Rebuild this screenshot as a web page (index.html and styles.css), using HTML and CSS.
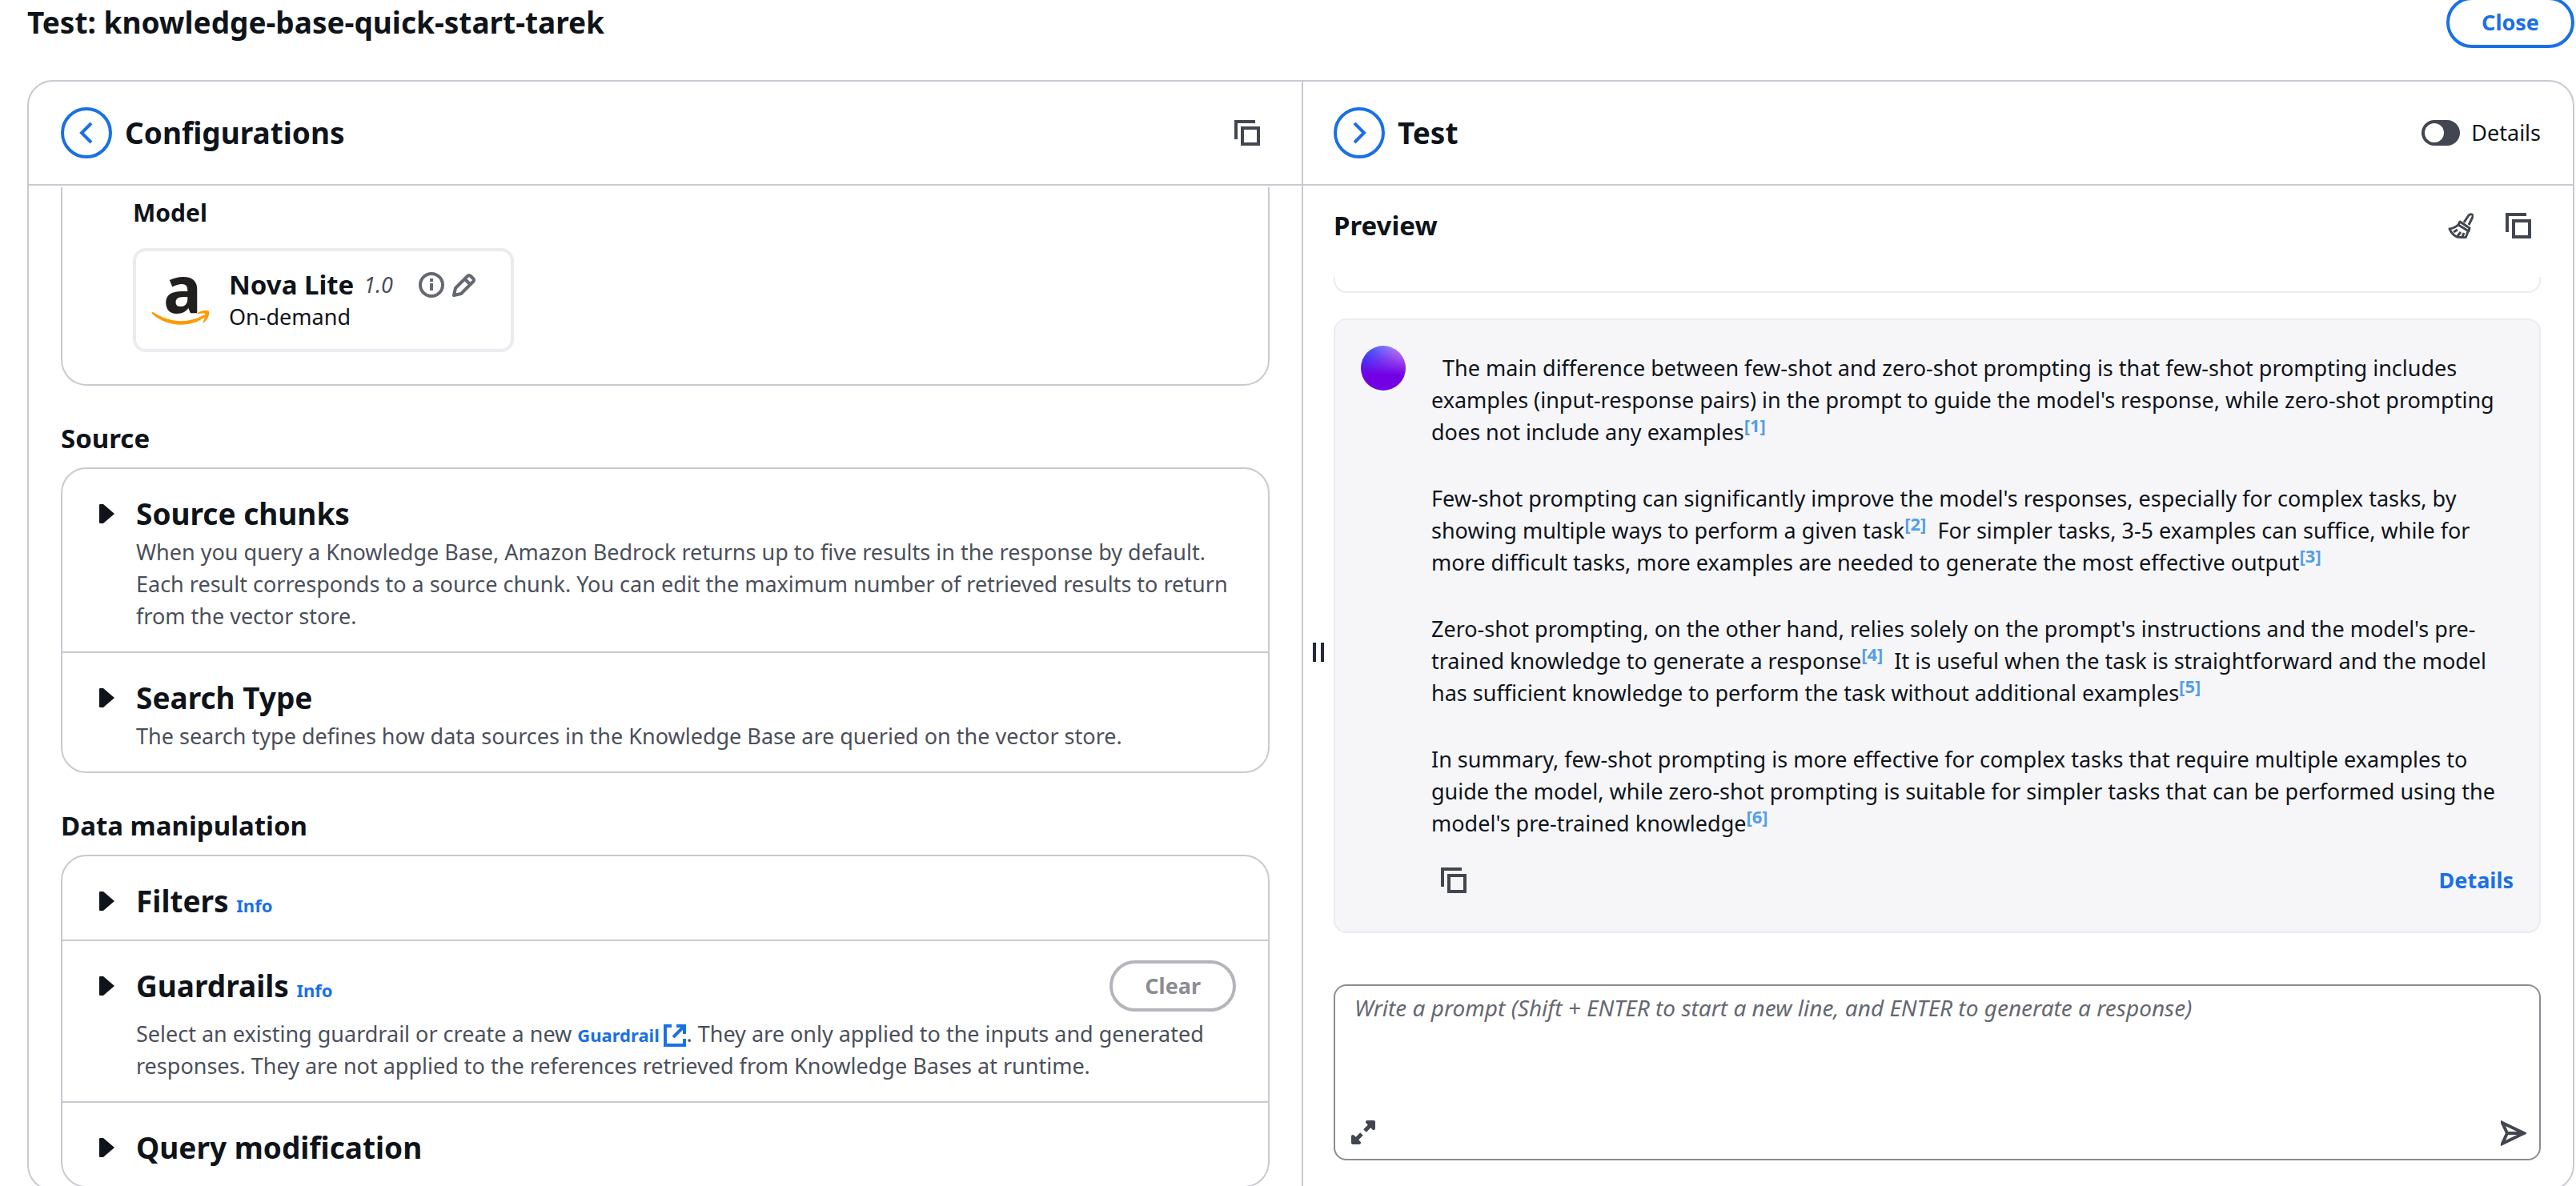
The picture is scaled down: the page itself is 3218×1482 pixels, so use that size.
FILE: index.html
```html
<!DOCTYPE html>
<html lang="en">
<head>
<meta charset="utf-8">
<title>Test: knowledge-base-quick-start-tarek</title>
<link rel="stylesheet" href="styles.css">
</head>
<body>
<svg class="sprite" aria-hidden="true">
  <symbol id="copy" viewBox="0 0 32 32"><path d="M26 2H2v22M10 10h20v20H10z" fill="none" stroke="currentColor" stroke-width="4"/></symbol>
  <symbol id="caret" viewBox="0 0 32 32"><path d="M6 5q0-1 1-1h4l14 12-14 12H7q-1 0-1-1z" fill="currentColor"/></symbol>
</svg>

<header class="page-header">
  <h1 class="title">Test: knowledge-base-quick-start-tarek</h1>
  <button class="btn" type="button">Close</button>
</header>

<main class="panel">
  <section class="pane pane-config">
    <header class="pane-header">
      <button class="round" type="button" aria-label="Collapse configurations"><svg class="icon" viewBox="0 0 32 32"><path d="M22 4L10 16l12 12" fill="none" stroke="currentColor" stroke-width="4"/></svg></button>
      <h2 class="title">Configurations</h2>
      <button class="icon-btn push" type="button" aria-label="Copy configurations"><svg class="icon"><use href="#copy"/></svg></button>
    </header>
    <div class="config-body">
      <div class="box box-model">
        <h4 class="label">Model</h4>
        <div class="model-card">
          <svg class="logo" viewBox="0 0 72 64" role="img" aria-label="Amazon">
            <text x="38" y="47" class="logo-letter" text-anchor="middle">a</text>
            <path fill="#ff9900" d="M1 46c20 13 43 15 63 4 2-1 4 1 2 2C48 66 18 65 0 48c-1-1 0-2 1-2z"/>
            <path fill="#ff9900" d="M57 47c4-3 13-4 14-2 1 3-1 10-6 14-1 1-2 0-1-1 1-3 3-8 2-10-1-1-6 0-9 0-1 0-1-1 0-1z"/>
          </svg>
          <div class="model-text">
            <div class="model-row">
              <span class="model-name">Nova Lite</span>
              <em class="model-version">1.0</em>
              <span class="model-icons">
                <button class="icon-btn muted bare" type="button" aria-label="Model info"><svg class="icon" viewBox="0 0 32 32"><circle cx="16" cy="16" r="14" fill="none" stroke="currentColor" stroke-width="4"/><path d="M14 8h4v4h-4zM14 14h4v9h-4z" fill="currentColor"/></svg></button>
                <button class="icon-btn muted bare" type="button" aria-label="Edit model"><svg class="icon" viewBox="0 0 32 32"><path d="M4 29l2-9L21 5q2-2 4 0l3 3q2 2 0 4L13 27zM18 9l6 6" fill="none" stroke="currentColor" stroke-width="4" stroke-linejoin="round"/></svg></button>
              </span>
            </div>
            <div class="model-mode">On-demand</div>
          </div>
        </div>
      </div>

      <h3 class="group-title">Source</h3>
      <div class="box">
        <section class="row">
          <button class="caret" type="button" aria-label="Expand source chunks"><svg class="icon"><use href="#caret"/></svg></button>
          <div class="row-main">
            <h4 class="title">Source chunks</h4>
            <p class="desc">When you query a Knowledge Base, Amazon Bedrock returns up to five results in the response by default. Each result corresponds to a source chunk. You can edit the maximum number of retrieved results to return from the vector store.</p>
          </div>
        </section>
        <section class="row">
          <button class="caret" type="button" aria-label="Expand search type"><svg class="icon"><use href="#caret"/></svg></button>
          <div class="row-main">
            <h4 class="title">Search Type</h4>
            <p class="desc">The search type defines how data sources in the Knowledge Base are queried on the vector store.</p>
          </div>
        </section>
      </div>

      <h3 class="group-title">Data manipulation</h3>
      <div class="box">
        <section class="row">
          <button class="caret" type="button" aria-label="Expand filters"><svg class="icon"><use href="#caret"/></svg></button>
          <div class="row-main">
            <h4 class="title">Filters <a class="link small" href="#">Info</a></h4>
          </div>
        </section>
        <section class="row row-action">
          <button class="caret" type="button" aria-label="Expand guardrails"><svg class="icon"><use href="#caret"/></svg></button>
          <div class="row-main">
            <div class="row-head">
              <h4 class="title">Guardrails <a class="link small" href="#">Info</a></h4>
              <button class="btn" type="button" disabled>Clear</button>
            </div>
            <p class="desc">Select an existing guardrail or create a new <a class="link small" href="#">Guardrail <svg class="external" viewBox="0 0 28 28"><path d="M10 2H2v24h24v-8M16 2h10v10M26 2L12 16" fill="none" stroke="currentColor" stroke-width="4"/></svg></a>. They are only applied to the inputs and generated responses. They are not applied to the references retrieved from Knowledge Bases at runtime.</p>
          </div>
        </section>
        <section class="row">
          <button class="caret" type="button" aria-label="Expand query modification"><svg class="icon"><use href="#caret"/></svg></button>
          <div class="row-main">
            <h4 class="title">Query modification</h4>
          </div>
        </section>
      </div>
    </div>
  </section>

  <section class="pane pane-test">
    <header class="pane-header">
      <button class="round" type="button" aria-label="Collapse test"><svg class="icon" viewBox="0 0 32 32"><path d="M10 4l12 12-12 12" fill="none" stroke="currentColor" stroke-width="4"/></svg></button>
      <h2 class="title">Test</h2>
      <label class="switch push"><input class="switch-input" type="checkbox" role="switch">Details</label>
    </header>
    <div class="test-body">
      <div class="resizer" role="separator" aria-orientation="vertical"><span class="bar"></span><span class="bar"></span></div>
      <div class="chat">
        <div class="preview-header">
          <h3 class="subtitle">Preview</h3>
          <div class="preview-actions">
            <button class="icon-btn" type="button" aria-label="Clear conversation"><svg class="icon" viewBox="0 0 32 32"><path d="M20 12l6-9q2-2 4-1t1 3l-5 10M15 11l12 8-1 4-13-8zM14 14q-5 5-12 6 3 7 9 10l11 1q2-4 3-8M7 24l5-3M12 29l4-5M18 30l2-5" fill="none" stroke="currentColor" stroke-width="3" stroke-linejoin="round"/></svg></button>
            <button class="icon-btn" type="button" aria-label="Copy conversation"><svg class="icon"><use href="#copy"/></svg></button>
          </div>
        </div>
        <div class="previous-message"></div>
        <article class="message">
          <span class="avatar"></span>
          <div class="message-main">
            <p class="answer">&nbsp; The main difference between few-shot and zero-shot prompting is that few-shot prompting includes examples (input-response pairs) in the prompt to guide the model's response, while zero-shot prompting does not include any examples<sup class="cite">[1]</sup></p>
            <p class="answer">Few-shot prompting can significantly improve the model's responses, especially for complex tasks, by showing multiple ways to perform a given task<sup class="cite">[2]</sup>&nbsp; For simpler tasks, 3-5 examples can suffice, while for more difficult tasks, more examples are needed to generate the most effective output<sup class="cite">[3]</sup></p>
            <p class="answer">Zero-shot prompting, on the other hand, relies solely on the prompt's instructions and the model's pre-trained knowledge to generate a response<sup class="cite">[4]</sup>&nbsp; It is useful when the task is straightforward and the model has sufficient knowledge to perform the task without additional examples<sup class="cite">[5]</sup></p>
            <p class="answer">In summary, few-shot prompting is more effective for complex tasks that require multiple examples to guide the model, while zero-shot prompting is suitable for simpler tasks that can be performed using the model's pre-trained knowledge<sup class="cite">[6]</sup></p>
            <div class="message-actions">
              <button class="icon-btn" type="button" aria-label="Copy answer"><svg class="icon"><use href="#copy"/></svg></button>
              <a class="link" href="#">Details</a>
            </div>
          </div>
        </article>
        <form class="composer">
          <textarea class="prompt" aria-label="Prompt" placeholder="Write a prompt (Shift + ENTER to start a new line, and ENTER to generate a response)"></textarea>
          <div class="composer-actions">
            <button class="icon-btn bare" type="button" aria-label="Expand prompt"><svg class="icon" viewBox="0 0 32 32"><path d="M20 2h8v8zM2 20v8h8z" fill="currentColor" stroke="currentColor" stroke-width="4" stroke-linejoin="round"/><path d="M24 6l-7 7M6 24l7-7" stroke="currentColor" stroke-width="5"/></svg></button>
            <button class="icon-btn bare" type="button" aria-label="Send"><svg class="icon" viewBox="0 0 32 32"><path d="M2 3l27 13L2 29l6-13zM8 16h20" fill="none" stroke="currentColor" stroke-width="4"/></svg></button>
          </div>
        </form>
      </div>
    </div>
  </section>
</main>
</body>
</html>
```
FILE: styles.css
```css
:root {
  --text: #0f141a;
  --muted: #4b4f5a;
  --icon: #424650;
  --link: #1a70e6;
  --line: #c9c9d1;
  --line-soft: #ebebf0;
}

* { box-sizing: border-box; }

body {
  display: flex;
  flex-direction: column;
  height: 100vh;
  margin: 0;
  padding: 0 2px 0 34px;
  overflow: hidden;
  background: #fff;
  color: var(--text);
  font: 27px/40px "Noto Sans", "Liberation Sans", sans-serif;
}

h1, h2, h3, h4, p { margin: 0; }
button { font: inherit; cursor: pointer; }

.sprite { display: none; }
.push { margin-left: auto; }

.title { font-size: 37px; line-height: 48px; font-weight: 700; }
.subtitle, .group-title { font-size: 33px; line-height: 40px; font-weight: 700; }
.link { color: var(--link); font-size: 27px; font-weight: 700; text-decoration: none; }
.small { font-size: 22px; line-height: 24px; }

.icon { display: block; width: 32px; height: 32px; }
.icon-btn { display: block; padding: 12px; border: 0; background: none; color: var(--icon); }
.bare { padding: 0; }
.muted { color: #656871; }

.btn {
  height: 64px;
  padding: 0 40px;
  border: 4px solid var(--link);
  border-radius: 32px;
  background: #fff;
  color: var(--link);
  font-size: 27px;
  font-weight: 700;
}
.btn:disabled { border-color: #b4b4bb; color: #8c8c94; cursor: default; }

.round {
  display: flex;
  align-items: center;
  justify-content: center;
  width: 64px;
  height: 64px;
  padding: 0;
  border: 4px solid var(--link);
  border-radius: 50%;
  background: #fff;
  color: var(--link);
}

.page-header {
  display: flex;
  flex: none;
  align-items: center;
  justify-content: space-between;
  height: 56px;
}

.panel {
  display: grid;
  flex: 1;
  grid-template-columns: calc(50% + 3px) 1fr;
  min-height: 0;
  margin: 44px 0 -6px;
  border: 2px solid var(--line);
  border-radius: 32px;
  overflow: hidden;
}
.pane { display: flex; flex-direction: column; min-width: 0; min-height: 0; }
.pane-config { border-right: 2px solid var(--line); }
.pane-header {
  display: flex;
  flex: none;
  align-items: center;
  gap: 16px;
  height: 130px;
  padding: 0 40px;
  border-bottom: 2px solid var(--line);
}
.pane-test .pane-header { padding-left: 38px; }

/* Configurations */
.config-body { padding: 2px 40px 0; overflow: hidden; }
.box { border: 2px solid var(--line); border-radius: 32px; }
.box-model { padding: 12px 88px 40px; border-top: 0; border-radius: 0 0 32px 32px; }
.label { font-size: 30px; line-height: 40px; font-weight: 700; }
.model-card {
  display: flex;
  align-items: center;
  gap: 24px;
  width: 476px;
  height: 130px;
  margin-top: 24px;
  padding: 2px 20px 0;
  border: 4px solid var(--line-soft);
  border-radius: 16px;
}
.logo { flex: none; width: 72px; height: 64px; overflow: visible; }
.logo-letter { font-size: 80px; font-weight: 700; fill: #221f1f; }
.model-row { display: flex; align-items: center; gap: 12px; }
.model-name { font-size: 33px; font-weight: 700; }
.model-version { color: var(--muted); }
.model-icons { display: flex; gap: 8px; margin-left: 20px; }

.group-title { margin: 46px 0 16px; }
.row { display: flex; gap: 20px; padding: 32px 40px 24px; }
.row + .row { border-top: 2px solid var(--line); }
.row-action { padding-top: 24px; }
.row-main { flex: 1; }
.row-head { display: flex; align-items: center; justify-content: space-between; margin-bottom: 8px; }
.caret {
  display: flex;
  align-items: center;
  width: 32px;
  height: 48px;
  padding: 0;
  border: 0;
  background: none;
  color: var(--text);
}
.row-action .caret { height: 64px; }
.title + .desc { margin-top: 4px; }
.desc { color: var(--muted); }
.external { width: 28px; height: 28px; vertical-align: -6px; }

/* Test */
.switch { display: flex; align-items: center; gap: 14px; }
.switch-input {
  width: 48px;
  height: 32px;
  margin: 0;
  padding: 4px;
  border-radius: 16px;
  background: var(--icon);
  appearance: none;
}
.switch-input::before {
  content: "";
  display: block;
  width: 24px;
  height: 24px;
  border-radius: 50%;
  background: #fff;
}
.switch-input:checked { padding-left: 20px; background: var(--link); }

.test-body { display: flex; flex: 1; min-height: 0; padding-right: 40px; }
.resizer {
  display: flex;
  flex: none;
  align-items: center;
  justify-content: center;
  gap: 6px;
  width: 38px;
  padding-bottom: 88px;
  cursor: col-resize;
}
.bar { width: 4px; height: 24px; background: #232b37; }

.chat { flex: 1; min-width: 0; }
.preview-header { display: flex; align-items: center; justify-content: space-between; height: 100px; }
.preview-actions { display: flex; gap: 16px; }
.previous-message {
  height: 20px;
  margin: 14px 0 32px;
  border: 2px solid var(--line-soft);
  border-top: 0;
  border-radius: 0 0 16px 16px;
}
.message {
  display: flex;
  gap: 32px;
  padding: 32px;
  border: 2px solid var(--line-soft);
  border-radius: 16px;
  background: #f6f6f9;
}
.avatar {
  flex: none;
  width: 56px;
  height: 56px;
  border-radius: 50%;
  background:
    linear-gradient(rgba(115, 0, 229, 0), #7300e5 65%),
    linear-gradient(90deg, #2a5cff 10%, #c98af5 90%);
}
.message-main { flex: 1; padding-top: 8px; }
.answer + .answer { margin-top: 43px; }
.cite { color: #539fe5; font-size: 22px; font-weight: 700; line-height: 20px; vertical-align: 10px; }
.message-actions { display: flex; align-items: center; justify-content: space-between; height: 64px; margin-top: 19px; }

.composer {
  display: flex;
  flex-direction: column;
  height: 220px;
  margin-top: 64px;
  border: 2px solid #8c8c94;
  border-radius: 16px;
}
.prompt {
  flex: 1;
  padding: 7px 24px;
  border: 0;
  border-radius: 16px;
  outline: 0;
  background: none;
  color: var(--text);
  font: inherit;
  font-size: 28px;
  resize: none;
}
.prompt::placeholder { color: #656871; font-style: italic; opacity: 1; }
.composer-actions { display: flex; justify-content: space-between; padding: 0 16px 16px 20px; }
```
